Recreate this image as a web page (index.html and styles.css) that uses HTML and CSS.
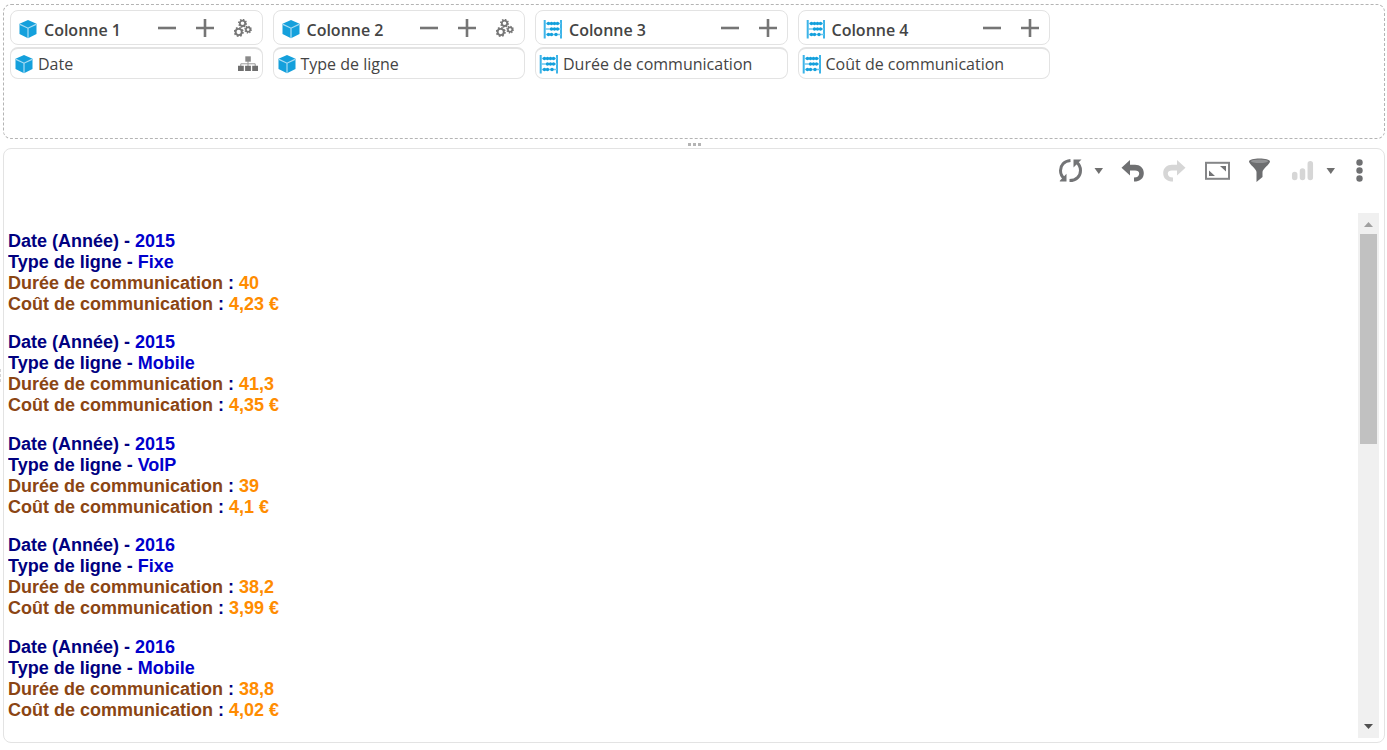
FILE: index.html
```
<!DOCTYPE html>
<html lang="fr">
<head>
<meta charset="utf-8">
<title>Rapport</title>
<link rel="stylesheet" href="styles.css">
</head>
<body>
<svg class="sprite" aria-hidden="true">
  <symbol id="cube" viewBox="0 0 20 20">
    <path fill="#14a0dc" d="M10 1 18.5 4.8V15L10 19.2 1.5 15V4.8Z"/>
    <path fill="none" stroke="#a9dcf3" stroke-width="1.2" d="M2 5.4 10 9.2 18 5.4M10 9.2V19"/>
  </symbol>
  <symbol id="abacus" viewBox="0 0 20 20">
    <path fill="none" stroke="#3db4e8" stroke-width="2" d="M1.700 1V19.500M18 1V19.500"/>
    <path fill="none" stroke="#6cc6ee" stroke-width="1.300" d="M2 4.500H18M2 10H18M2 15.500H18"/>
    <g fill="#14a0dc"><circle cx="5.500" cy="4.500" r="1.700"/><circle cx="8.500" cy="4.500" r="1.700"/><circle cx="11.500" cy="4.500" r="1.700"/><circle cx="14.500" cy="4.500" r="1.700"/><circle cx="8.500" cy="10" r="1.700"/><circle cx="11.500" cy="10" r="1.700"/><circle cx="14.500" cy="10" r="1.700"/><circle cx="5.500" cy="15.500" r="1.700"/><circle cx="8.500" cy="15.500" r="1.700"/><circle cx="13" cy="15.500" r="1.700"/></g>
  </symbol>
  <symbol id="minus" viewBox="0 0 18 18"><path stroke="#757575" stroke-width="2.6" d="M0 9H18"/></symbol>
  <symbol id="plus" viewBox="0 0 18 18"><path stroke="#757575" stroke-width="2.6" d="M0 9H18M9 0V18"/></symbol>
  <symbol id="gears" viewBox="0 0 18 18">
    <g fill="none" stroke="#777">
      <circle cx="8.5" cy="4.3" r="2.7" stroke-width="1.8"/><circle cx="8.5" cy="4.3" r="3.7" stroke-width="1.6" stroke-dasharray="1.45 1.45"/>
      <circle cx="4.7" cy="13" r="3.1" stroke-width="1.9"/><circle cx="4.7" cy="13" r="4.2" stroke-width="1.7" stroke-dasharray="1.65 1.65"/>
      <circle cx="14.1" cy="10.6" r="2.2" stroke-width="1.7"/><circle cx="14.1" cy="10.6" r="3.2" stroke-width="1.4" stroke-dasharray="1.25 1.25"/>
    </g>
  </symbol>
  <symbol id="tree" viewBox="0 0 20 16">
    <path fill="none" stroke="#999" stroke-width="1" d="M10 5V10M2.8 10V7.8H17.2V10"/>
    <path fill="#8a8a8a" d="M7.3.3H12.8V5.7H7.3Z"/><path fill="#6f6f6f" d="M0 9.700H5.800V15H0ZM7.100 9.700H12.900V15H7.100ZM14.200 9.700H20V15H14.200Z"/>
  </symbol>
  <symbol id="caret" viewBox="0 0 12 26"><path fill="#6f6f6f" d="M1.500 10H10L5.800 16Z"/></symbol>
  <symbol id="arrow-back" viewBox="0 0 26 26"><path d="M3.5 9.8 12 2V6.8H17C22 6.8 25.8 10 25.8 15 25.8 20.5 22 23.6 16 23.6V19.6C19.5 19.6 21.2 17.8 21.2 15.5 21.2 13.4 19.6 12.4 17 12.4H12V17.5Z"/></symbol>
</svg>

<div class="side-handle" aria-hidden="true"><i></i><i></i><i></i></div>
<main class="workspace">
  <section class="columns" aria-label="Colonnes">
    <div class="column-list">
      <div class="column">
        <header class="column-head"><svg class="field-icon"><use href="#cube"/></svg><h2>Colonne 1</h2>
          <button aria-label="Réduire"><svg><use href="#minus"/></svg></button><button aria-label="Ajouter"><svg><use href="#plus"/></svg></button><button aria-label="Paramètres"><svg><use href="#gears"/></svg></button></header>
        <div class="field"><svg class="field-icon"><use href="#cube"/></svg><span>Date</span><button aria-label="Hiérarchie"><svg class="tree"><use href="#tree"/></svg></button></div>
      </div>
      <div class="column">
        <header class="column-head"><svg class="field-icon"><use href="#cube"/></svg><h2>Colonne 2</h2>
          <button aria-label="Réduire"><svg><use href="#minus"/></svg></button><button aria-label="Ajouter"><svg><use href="#plus"/></svg></button><button aria-label="Paramètres"><svg><use href="#gears"/></svg></button></header>
        <div class="field"><svg class="field-icon"><use href="#cube"/></svg><span>Type de ligne</span></div>
      </div>
      <div class="column">
        <header class="column-head"><svg class="field-icon"><use href="#abacus"/></svg><h2>Colonne 3</h2>
          <button aria-label="Réduire"><svg><use href="#minus"/></svg></button><button aria-label="Ajouter"><svg><use href="#plus"/></svg></button></header>
        <div class="field"><svg class="field-icon"><use href="#abacus"/></svg><span>Durée de communication</span></div>
      </div>
      <div class="column">
        <header class="column-head"><svg class="field-icon"><use href="#abacus"/></svg><h2>Colonne 4</h2>
          <button aria-label="Réduire"><svg><use href="#minus"/></svg></button><button aria-label="Ajouter"><svg><use href="#plus"/></svg></button></header>
        <div class="field"><svg class="field-icon"><use href="#abacus"/></svg><span>Coût de communication</span></div>
      </div>
    </div>
  </section>

  <div class="row-handle" aria-hidden="true"><i></i><i></i><i></i></div>

  <section class="report" aria-label="Résultats">
    <div class="toolbar" role="toolbar" aria-label="Actions">
      <button aria-label="Actualiser"><svg viewBox="0 0 26 26"><g fill="none" stroke="#737476" stroke-width="3"><path d="M12.5 2.5C6 3 2.500 7.500 2.500 12.500 2.500 16 4 18.700 6.300 20.500"/><path d="M11.500 22.600C18.500 22.600 22.500 18 22.500 12.500 22.500 9 21 6.300 18.700 4.500"/></g><path fill="#737476" d="M1.800 22.800 8.500 15.800V23.500H1.800ZM15.500 1.500H23.500L15.500 9.500Z"/></svg></button>
      <button class="menu-caret" aria-label="Options d’actualisation"><svg><use href="#caret"/></svg></button>
      <button class="dark" aria-label="Annuler"><svg><use href="#arrow-back"/></svg></button>
      <button class="light" aria-label="Rétablir"><svg viewBox="0 0 26 26"><use href="#arrow-back" width="26" height="26" transform="matrix(-1 0 0 1 28 0)"/></svg></button>
      <button aria-label="Plein écran"><svg viewBox="0 0 26 26"><rect x="2" y="4.8" width="23" height="16" fill="none" stroke="#858688" stroke-width="2"/><path fill="#737476" d="M5 12.500 11 18H5ZM16 8H22V13.500Z"/></svg></button>
      <button aria-label="Filtrer"><svg viewBox="0 0 26 26"><path fill="#6d6e70" d="M2 3.500C2-.5 23-.5 23 3.500 23 6 15.500 11 15.500 14V19L9.500 24V14C9.500 11 2 6 2 3.500Z"/><ellipse cx="12.500" cy="3.200" rx="8.500" ry="1.700" fill="#929395"/></svg></button>
      <button aria-label="Graphique"><svg viewBox="0 0 26 26"><path stroke="#d6d6d6" stroke-width="5.500" stroke-linecap="round" d="M4.700 16.500V19.500M12.500 13V19.500M20.300 5.800V19.500"/></svg></button>
      <button class="menu-caret" aria-label="Types de graphique"><svg><use href="#caret"/></svg></button>
      <button class="more" aria-label="Plus"><svg viewBox="0 0 16 26"><g fill="#6f7072"><circle cx="9.500" cy="4.500" r="3.200"/><circle cx="9.500" cy="12.500" r="3.200"/><circle cx="9.500" cy="20.500" r="3.200"/></g></svg></button>
    </div>
    <div class="report-body">
      <div class="records">
        <article><p>Date (Année) - <b>2015</b></p><p>Type de ligne - <b>Fixe</b></p><p><span>Durée de communication</span> : <em>40</em></p><p><span>Coût de communication</span> : <em>4,23 €</em></p></article>
        <article><p>Date (Année) - <b>2015</b></p><p>Type de ligne - <b>Mobile</b></p><p><span>Durée de communication</span> : <em>41,3</em></p><p><span>Coût de communication</span> : <em>4,35 €</em></p></article>
        <article><p>Date (Année) - <b>2015</b></p><p>Type de ligne - <b>VoIP</b></p><p><span>Durée de communication</span> : <em>39</em></p><p><span>Coût de communication</span> : <em>4,1 €</em></p></article>
        <article><p>Date (Année) - <b>2016</b></p><p>Type de ligne - <b>Fixe</b></p><p><span>Durée de communication</span> : <em>38,2</em></p><p><span>Coût de communication</span> : <em>3,99 €</em></p></article>
        <article><p>Date (Année) - <b>2016</b></p><p>Type de ligne - <b>Mobile</b></p><p><span>Durée de communication</span> : <em>38,8</em></p><p><span>Coût de communication</span> : <em>4,02 €</em></p></article>
      </div>
      <div class="scrollbar">
        <button aria-label="Défiler vers le haut"><svg viewBox="0 0 21 21"><path fill="#a0a0a0" d="M6 14H15L10.500 9Z"/></svg></button>
        <div class="thumb"></div>
        <button aria-label="Défiler vers le bas"><svg viewBox="0 0 21 21"><path fill="#505050" d="M6 7H15L10.500 12Z"/></svg></button>
      </div>
    </div>
  </section>
</main>
</body>
</html>
```
FILE: styles.css
```
* { box-sizing: border-box; }
body {
  margin: 0;
  height: 100vh;
  display: flex;
  background: #fff;
  color: #444;
  font-family: "Open Sans", sans-serif;
  overflow: hidden;
}
button { border: 0; padding: 0; background: none; display: block; flex: none; cursor: pointer; }
svg { display: block; }
.sprite { position: absolute; width: 0; height: 0; }

.side-handle { width: 3px; display: flex; flex-direction: column; justify-content: center; gap: 2px; overflow: hidden; }
.side-handle i { width: 1px; height: 3px; background: #d4d4d4; }
.workspace { flex: 1; min-width: 0; display: flex; flex-direction: column; padding: 4px 2px 7px 0; }

.columns { min-height: 135px; border: 1px dashed #b4b4b4; border-radius: 8px; padding: 5px 6px; }
.column-list { display: grid; grid-template-columns: repeat(4, 1fr); gap: 10px; max-width: 1040px; }
.column { display: flex; flex-direction: column; gap: 2px; min-width: 0; }
.column-head, .field { border: 1px solid #e3e3e3; border-radius: 8px; display: flex; align-items: center; }
.column-head { height: 35px; padding: 0 10px 0 7px; gap: 20px; }
.column-head h2 { flex: 1; margin: 4px 0 0 -14px; font-size: 16px; line-height: 22px; font-weight: 600; white-space: nowrap; }
.column-head button svg { width: 18px; height: 18px; }
.field-icon { width: 20px; height: 20px; flex: none; }
.column-head .field-icon { margin-top: 2px; }
.field { height: 32px; border-top-width: 2px; padding: 0 4px 0 3px; font-size: 16px; line-height: 22px; gap: 4px; white-space: nowrap; }
.field span { flex: 1; }
.field .tree { width: 20px; height: 16px; }

.row-handle { height: 9px; padding-top: 1px; display: flex; align-items: center; justify-content: center; gap: 2px; }
.row-handle i { width: 3px; height: 3px; background: #b4b4b4; }

.report { flex: 1; min-height: 0; border: 1px solid #e3e3e3; border-radius: 8px; display: flex; flex-direction: column; }
.toolbar { height: 64px; padding: 9px 18px 0 0; display: flex; justify-content: flex-end; align-items: flex-start; gap: 17px; }
.toolbar svg { width: 26px; height: 26px; }
.toolbar .menu-caret { margin: 0 -4px 0 -8px; }
.toolbar .menu-caret svg { width: 12px; }
.toolbar .more svg { width: 16px; }
.dark { fill: #6f7072; }
.light { fill: #d6d6d6; }

.report-body { flex: 1; min-height: 0; display: flex; padding: 0 5px 4px 4px; }
.records { flex: 1; overflow: hidden; padding-top: 18px; font: bold 18px/21px "Liberation Sans", Arial, sans-serif; color: #000080; }
.records p { margin: 0; }
.records article { margin-bottom: 17px; }
.records article:nth-child(even) { margin-bottom: 18px; }
.records b { color: #0000cd; }
.records span { color: #8b4513; }
.records em { color: #ff8c00; font-style: normal; }

.scrollbar { width: 21px; background: #f0f0f0; display: flex; flex-direction: column; }
.scrollbar svg { width: 21px; height: 21px; }
.thumb { height: 40%; margin: 0 2px auto; background: #c1c1c1; }
```
